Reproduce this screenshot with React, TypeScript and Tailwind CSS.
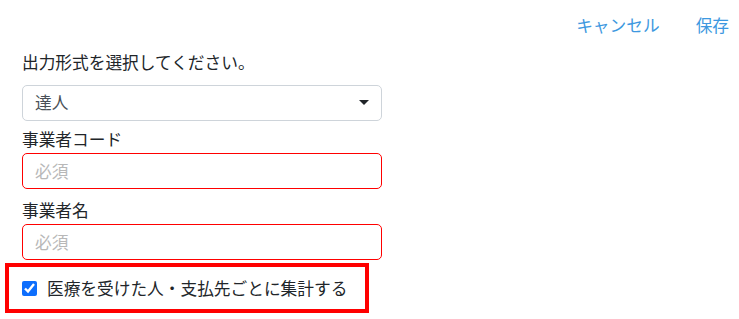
import React, { useState } from "react";

function App() {
  const [grouped, setGrouped] = useState(true);

  return (
    <div
      className="w-[739px] h-[319px] bg-white text-[#212529] text-[16.7px]"
      style={{ fontFamily: '"Noto Sans CJK JP", "Noto Sans", sans-serif' }}
    >
      <div className="flex justify-end gap-[36px] pr-[10px] pt-[6px] h-[44px]">
        <button className="text-[#3d98e0] leading-[26px]">キャンセル</button>
        <button className="text-[#3d98e0] leading-[26px]">保存</button>
      </div>

      <div className="pl-[22px] w-[382px]">
        <p className="leading-[24px] mt-[6px]">出力形式を選択してください。</p>

        <div className="relative mt-[11px] h-[36px] border border-[#ced4da] rounded-[5px] flex items-center pl-[12px]">
          <span className="text-[#495057]">達人</span>
          <span className="absolute right-[12px] top-[14px] w-0 h-0 border-l-[5px] border-r-[5px] border-t-[5px] border-l-transparent border-r-transparent border-t-[#212529]"></span>
        </div>

        <label className="block leading-[24px] mt-[6px]">事業者コード</label>
        <input
          placeholder="必須"
          className="block mt-[2px] w-full h-[36px] border border-[#ff0000] rounded-[5px] px-[12px] placeholder:text-[#b8b8b8] outline-none"
        />

        <label className="block leading-[24px] mt-[9px]">事業者名</label>
        <input
          placeholder="必須"
          className="block mt-[2px] w-full h-[36px] border border-[#ff0000] rounded-[5px] px-[12px] placeholder:text-[#b8b8b8] outline-none"
        />
      </div>

      <div className="ml-[5px] mt-[3px] w-[364px] h-[50px] border-[4px] border-[#ff0000] flex items-center pl-[13px] gap-[10px]">
        <input
          type="checkbox"
          checked={grouped}
          onChange={() => setGrouped(!grouped)}
          className="w-[15px] h-[15px] accent-[#0d6efd]"
        />
        <span className="leading-[24px]">医療を受けた人・支払先ごとに集計する</span>
      </div>
    </div>
  );
}

export default App;
